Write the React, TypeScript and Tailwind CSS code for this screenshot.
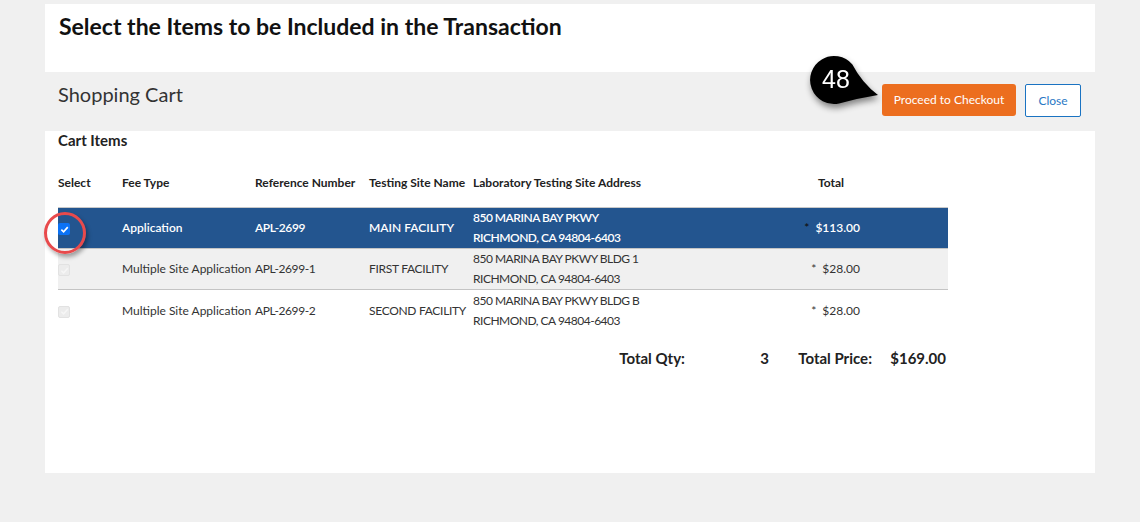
import React from 'react';

type Item = {
  feeType: string;
  ref: string;
  site: string;
  addr1: string;
  addr2: string;
  total: string;
  selected: boolean;
};

const ITEMS: Item[] = [
  { feeType: 'Application', ref: 'APL-2699', site: 'MAIN FACILITY', addr1: '850 MARINA BAY PKWY', addr2: 'RICHMOND, CA 94804-6403', total: '$113.00', selected: true },
  { feeType: 'Multiple Site Application', ref: 'APL-2699-1', site: 'FIRST FACILITY', addr1: '850 MARINA BAY PKWY BLDG 1', addr2: 'RICHMOND, CA 94804-6403', total: '$28.00', selected: false },
  { feeType: 'Multiple Site Application', ref: 'APL-2699-2', site: 'SECOND FACILITY', addr1: '850 MARINA BAY PKWY BLDG B', addr2: 'RICHMOND, CA 94804-6403', total: '$28.00', selected: false },
];

const COLS = 'grid grid-cols-[64px_133px_114px_104px_317px_158px]';

const CheckBox: React.FC<{ checked: boolean }> = ({ checked }) =>
  checked ? (
    <span className="flex h-[12px] w-[12px] items-center justify-center rounded-[2px] bg-[#0b72f5]">
      <svg width="9" height="9" viewBox="0 0 10 10">
        <path d="M1.5 5.2 L4 7.6 L8.6 2.4" fill="none" stroke="white" strokeWidth="1.8" />
      </svg>
    </span>
  ) : (
    <span className="flex h-[12px] w-[12px] items-center justify-center rounded-[2px] border border-[#e2e2e2] bg-[#ececec]">
      <svg width="9" height="9" viewBox="0 0 10 10">
        <path d="M1.5 5.2 L4 7.6 L8.6 2.4" fill="none" stroke="#f6f6f6" strokeWidth="1.6" />
      </svg>
    </span>
  );

const StepBadge: React.FC = () => (
  <svg
    className="absolute left-[805px] top-[52px] drop-shadow-[1px_4px_3px_rgba(0,0,0,0.45)]"
    width="80"
    height="62"
    viewBox="0 0 80 62"
  >
    <path
      d="M47.4 12.5 Q57 31 73 43 Q54 46 34.1 51.5 A24 24 0 1 1 47.4 12.5 Z"
      fill="#000"
    />
    <text
      x="31"
      y="35.5"
      textAnchor="middle"
      fill="#fff"
      fontSize="25"
      fontFamily="'Liberation Sans', Arial, sans-serif"
    >
      48
    </text>
  </svg>
);

export default function App() {
  return (
    <div
      className="relative h-[522px] w-full bg-[#f0f0f0] px-[45px] pt-[4px] text-[#333]"
      style={{ fontFamily: "Lato, 'Liberation Sans', sans-serif" }}
    >
      <div className="h-[68px] bg-white pl-[14px] pt-[8px]">
        <h1 className="text-[23px] font-bold leading-[28px] text-[#111]">
          Select the Items to be Included in the Transaction
        </h1>
      </div>

      <div className="flex h-[59px] items-start justify-between pl-[13px] pr-[14px]">
        <h2 className="pt-[8px] text-[20px] font-normal leading-[28px] text-[#333]">Shopping Cart</h2>
        <div className="flex gap-[9px] pt-[12px]">
          <button className="h-[32px] w-[134px] rounded-[3px] bg-[#ec6e1f] text-[12px] text-white">
            Proceed to Checkout
          </button>
          <button className="h-[33px] w-[56px] rounded-[2px] border border-[#1a73c2] bg-white text-[12px] text-[#2a78c4]">
            Close
          </button>
        </div>
      </div>

      <div className="h-[342px] bg-white pl-[13px]">
        <div className="text-[15px] font-bold leading-[18px] text-[#222]">Cart Items</div>

        <div className="mt-[24px] w-[890px] text-[12px]">
          <div className={`${COLS} border-b border-[#c9c9c9] pb-[14px] font-bold leading-[20px] text-[#222]`}>
            <div>Select</div>
            <div>Fee Type</div>
            <div>Reference Number</div>
            <div>Testing Site Name</div>
            <div>Laboratory Testing Site Address</div>
            <div className="pl-[28px]">Total</div>
          </div>

          {ITEMS.map((it, i) => {
            const rowClass = it.selected
              ? 'bg-[#23558f] text-white'
              : i === 1
                ? 'bg-[#f0f0f0] text-[#333]'
                : 'bg-white text-[#333]';
            return (
              <div
                key={it.ref}
                className={`${COLS} h-[41px] items-center leading-[20px] ${
                  i < ITEMS.length - 1 ? 'border-b border-[#c4c4c4]' : ''
                } ${rowClass} ${it.selected ? 'font-semibold' : ''}`}
              >
                <div className="pt-[2px]">
                  <CheckBox checked={it.selected} />
                </div>
                <div>{it.feeType}</div>
                <div className="tracking-[-0.4px]">{it.ref}</div>
                <div className={it.selected ? '' : 'tracking-[-0.3px]'}>{it.site}</div>
                <div className="tracking-[-0.5px]">
                  <div>{it.addr1}</div>
                  <div>{it.addr2}</div>
                </div>
                <div className="flex justify-end gap-[6px] pr-[88px]">
                  <span className={it.selected ? 'text-[#111]' : ''}>*</span>
                  <span>{it.total}</span>
                </div>
              </div>
            );
          })}

          <div className="mt-[17px] flex justify-end pr-[2px] text-[15px] font-bold leading-[20px] text-[#222]">
            <div className="w-[141px]">Total Qty:</div>
            <div className="w-[38px]">3</div>
            <div className="w-[92px]">Total Price:</div>
            <div>$169.00</div>
          </div>
        </div>
      </div>

      <StepBadge />
      <div className="absolute left-[44px] top-[212px] h-[42px] w-[42px] rounded-full border-[3px] border-[#e84a4c] shadow-[2px_3px_4px_rgba(0,0,0,0.35)]" />
    </div>
  );
}
